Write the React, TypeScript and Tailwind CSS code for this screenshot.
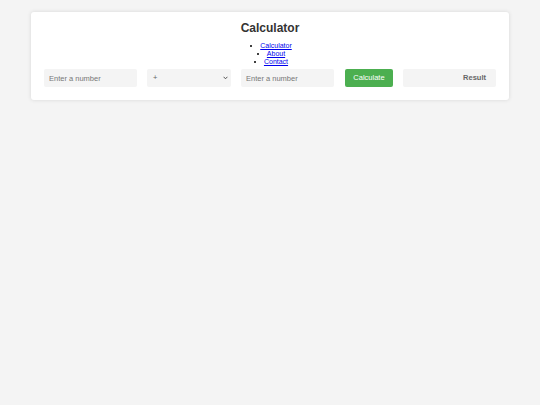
import React from "react";

export default function App() {
  return (
    <div
      className="min-h-[405px] w-full bg-[#f4f4f4] px-[31px] pt-[12px]"
      style={{ fontFamily: '"Liberation Sans", Arial, sans-serif' }}
    >
      <div className="rounded-[3px] bg-white px-[13px] pt-[8px] pb-[13px] shadow-[0_0_4px_rgba(0,0,0,0.12)]">
        <h1 className="text-center text-[12px] font-bold leading-[16px] text-[#333]">Calculator</h1>
        <ul className="mt-[6px] list-disc pl-[2px] text-center text-[7px] leading-[8px] [list-style-position:inside]">
          <li>
            <a href="#" className="text-[#0000ee] underline">Calculator</a>
          </li>
          <li>
            <a href="#" className="text-[#0000ee] underline">About</a>
          </li>
          <li>
            <a href="#" className="text-[#0000ee] underline">Contact</a>
          </li>
        </ul>
        <div className="mt-[3px] flex items-center justify-between">
          <input
            type="text"
            placeholder="Enter a number"
            className="h-[18px] w-[93px] rounded-[2px] bg-[#f4f4f4] pl-[5px] text-[7.5px] text-[#333] outline-none placeholder:text-[#777]"
          />
          <div className="relative flex h-[18px] w-[84px] items-center rounded-[2px] bg-[#f4f4f4] pl-[6px] text-[7.5px] text-[#666]">
            <span>+</span>
            <svg className="absolute right-[3px] top-[7px]" width="5" height="4" viewBox="0 0 5 4">
              <path d="M0.6 0.8 L2.5 2.8 L4.4 0.8" fill="none" stroke="#444" strokeWidth="0.9" />
            </svg>
          </div>
          <input
            type="text"
            placeholder="Enter a number"
            className="h-[18px] w-[93px] rounded-[2px] bg-[#f4f4f4] pl-[5px] text-[7.5px] text-[#333] outline-none placeholder:text-[#777]"
          />
          <button className="ml-[1px] h-[18px] w-[48px] rounded-[2px] bg-[#4caf50] text-center text-[7.5px] text-white">
            Calculate
          </button>
          <div className="flex h-[18px] w-[93px] items-center justify-end rounded-[2px] bg-[#f4f4f4] pr-[10px] text-[7.5px] font-bold text-[#666]">
            Result
          </div>
        </div>
      </div>
    </div>
  );
}
